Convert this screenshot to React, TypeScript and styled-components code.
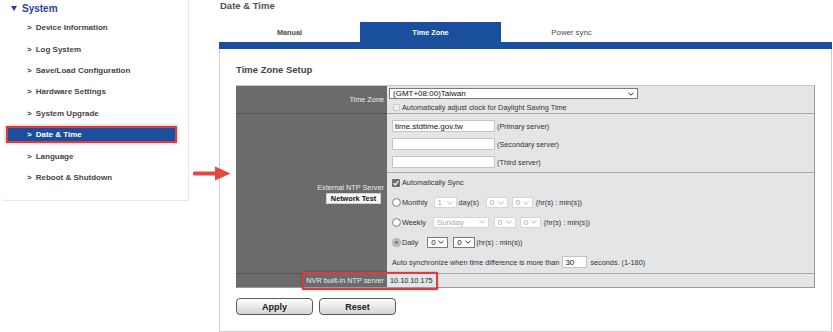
import React from "react";
import styled, { createGlobalStyle } from "styled-components";

const BLUE = "#1a4f9e";

const GlobalStyle = createGlobalStyle`
  html, body { margin: 0; padding: 0; background: #fff; }
  body {
    font-family: "Liberation Sans", Arial, sans-serif;
    width: 833px;
    height: 332px;
    overflow: hidden;
  }
  * { box-sizing: border-box; }
`;

const Page = styled.div`
  position: relative;
  display: flex;
  align-items: flex-start;
  width: 833px;
  height: 332px;
`;

/* ---------- Sidebar ---------- */
const Sidebar = styled.nav`
  flex-shrink: 0;
  width: 189px;
  height: 201px;
  border-right: 1px solid #e8e8e8;
  border-bottom: 1px solid #e8e8e8;
  border-bottom-left-radius: 4px;
`;

const SidebarHeader = styled.div`
  display: flex;
  align-items: center;
  gap: 5px;
  height: 17px;
  padding-left: 11px;
  color: #2b3f97;
  font-size: 10px;
  font-weight: bold;
`;

const MenuList = styled.ul`
  list-style: none;
  margin: 0;
  padding: 0;
`;

const MenuItem = styled.li`
  display: flex;
  align-items: center;
  height: 21.4px;
  padding-left: 6px;
`;

const MenuBox = styled.div<{ $active?: boolean }>`
  display: flex;
  align-items: center;
  width: 171px;
  height: 17px;
  padding-left: 19px;
  border: 2px solid ${(p) => (p.$active ? "#e0393e" : "transparent")};
  background: ${(p) => (p.$active ? BLUE : "transparent")};
  box-shadow: ${(p) => (p.$active ? "0 0 3px rgba(0,0,0,0.35)" : "none")};
  color: ${(p) => (p.$active ? "#fff" : "#444")};
  font-size: 8px;
  font-weight: bold;
  white-space: nowrap;
`;

const MenuChevron = styled.span`
  margin-right: 4px;
`;

/* ---------- Main ---------- */
const Main = styled.main`
  display: flex;
  flex-direction: column;
  width: 613px;
  height: 332px;
  margin-left: 30px;
`;

const PageTitle = styled.h1`
  margin: 0;
  height: 22px;
  padding-left: 1px;
  font-size: 9.5px;
  line-height: 12px;
  font-weight: bold;
  color: #515151;
`;

const TabRow = styled.div`
  display: flex;
  height: 20px;
`;

const Tab = styled.div<{ $active?: boolean; $bold?: boolean }>`
  display: flex;
  align-items: center;
  justify-content: center;
  width: 141px;
  background: ${(p) => (p.$active ? BLUE : "#fff")};
  color: ${(p) => (p.$active ? "#fff" : "#4a4a4a")};
  font-size: ${(p) => (p.$bold ? "7.3px" : "7.8px")};
  font-weight: ${(p) => (p.$bold ? "bold" : "normal")};
`;

const TabBar = styled.div`
  height: 7px;
  background: ${BLUE};
`;

const Panel = styled.section`
  flex: 1;
  border: 1px solid #cfcfcf;
  border-top: none;
  padding: 15px 16px 0 16px;
`;

const SectionTitle = styled.h2`
  margin: 0 0 9px 0;
  font-size: 9.5px;
  line-height: 12px;
  font-weight: bold;
  color: #454545;
`;

const Table = styled.div`
  width: 579px;
  border-top: 1px solid #c6c6c6;
  border-right: 1px solid #9a9a9a;
  border-bottom: 1px solid #9a9a9a;
  font-size: 7.3px;
`;

const Row = styled.div<{ $h: number }>`
  position: relative;
  display: flex;
  height: ${(p) => p.$h}px;
`;

const LabelCell = styled.div<{ $divider?: boolean }>`
  display: flex;
  flex-direction: column;
  align-items: flex-end;
  justify-content: center;
  gap: 1px;
  width: 151px;
  padding-right: 3px;
  background: #6b6b6b;
  color: #ececec;
  border-bottom: ${(p) => (p.$divider ? "1px solid #535353" : "none")};
  white-space: nowrap;
`;

const ValueCell = styled.div<{ $divider?: boolean; $pad?: string }>`
  display: flex;
  flex-direction: column;
  flex: 1;
  background: #e4e5e7;
  color: #2c2c2c;
  padding: ${(p) => p.$pad || "0"};
  border-bottom: ${(p) => (p.$divider ? "1px solid #a9a9a9" : "none")};
  white-space: nowrap;
`;

const InlineValue = styled.div`
  display: flex;
  align-items: center;
  height: 100%;
  padding-left: 3px;
  color: #222;
`;

const SelectBox = styled.div<{ $w: number; $disabled?: boolean; $ml?: number }>`
  display: flex;
  align-items: center;
  justify-content: space-between;
  flex-shrink: 0;
  width: ${(p) => p.$w}px;
  height: 11px;
  margin-left: ${(p) => p.$ml ?? 0}px;
  padding: 0 3px 0 3px;
  background: #fff;
  border: 1px solid ${(p) => (p.$disabled ? "#d6d6d6" : "#7a7a7a")};
  color: ${(p) => (p.$disabled ? "#a8a8a8" : "#111")};
  font-size: 8px;
  line-height: 9px;
`;

const CheckLine = styled.div`
  display: flex;
  align-items: center;
  gap: 2px;
  height: 10px;
  margin-top: 3px;
  padding-left: 4px;
  color: #333;
`;

const DisabledBox = styled.span`
  display: inline-block;
  width: 7px;
  height: 7px;
  border: 1px solid #c9c9c9;
  background: #efefef;
  border-radius: 1px;
`;

const ServerBlock = styled.div`
  display: flex;
  flex-direction: column;
  gap: 6px;
  height: 59px;
  padding: 6px 0 0 5px;
  border-bottom: 1px solid #a9a9a9;
`;

const ServerLine = styled.div`
  display: flex;
  align-items: center;
  gap: 2px;
  height: 12px;
  color: #333;
`;

const TextInput = styled.div<{ $w: number }>`
  display: flex;
  align-items: center;
  width: ${(p) => p.$w}px;
  height: 12px;
  padding-left: 2px;
  background: #fff;
  border: 1px solid #c4c4c4;
  color: #111;
  font-size: 8px;
`;

const SyncBlock = styled.div`
  display: flex;
  flex-direction: column;
  flex: 1;
`;

const SyncLine = styled.div`
  display: flex;
  align-items: center;
  height: 19.8px;
  padding-left: 5px;
  color: #333;
`;

const Gap = styled.span<{ $w: number }>`
  display: inline-block;
  flex-shrink: 0;
  width: ${(p) => p.$w}px;
`;

const NetworkButton = styled.div`
  display: flex;
  align-items: center;
  justify-content: center;
  width: 55px;
  height: 11px;
  margin-right: 3px;
  background: #f7f7f7;
  border: 1px solid #d0d0d0;
  color: #111;
  font-weight: bold;
`;

const Highlight = styled.div`
  position: absolute;
  left: 66px;
  top: -2px;
  width: 136px;
  height: 18px;
  border: 2px solid #e0393e;
  box-shadow: 0 0 2px rgba(0, 0, 0, 0.3);
  pointer-events: none;
`;

const ButtonRow = styled.div`
  display: flex;
  gap: 6px;
  margin-top: 10px;
`;

const ActionButton = styled.button`
  width: 77px;
  height: 17px;
  padding: 0;
  border: 1px solid #5a5a5a;
  border-radius: 4px;
  background: linear-gradient(#ffffff, #e4e4e4 60%, #d6d6d6);
  color: #222;
  font-family: "Liberation Sans", Arial, sans-serif;
  font-size: 9px;
  font-weight: bold;
`;

const ArrowWrap = styled.div`
  position: absolute;
  left: 193px;
  top: 166px;
  width: 38px;
  height: 15px;
`;

/* ---------- small drawings ---------- */
const Chevron = ({ color }: { color: string }) => (
  <svg width="6" height="4" viewBox="0 0 6 4">
    <polyline points="0.5,0.8 3,3.2 5.5,0.8" fill="none" stroke={color} strokeWidth="1" />
  </svg>
);

const Select = ({
  w,
  value,
  disabled,
  ml,
}: {
  w: number;
  value: string;
  disabled?: boolean;
  ml?: number;
}) => (
  <SelectBox $w={w} $disabled={disabled} $ml={ml}>
    <span>{value}</span>
    <Chevron color={disabled ? "#b5b5b5" : "#333"} />
  </SelectBox>
);

const Radio = ({ checked }: { checked?: boolean }) => (
  <svg width="9" height="9" viewBox="0 0 9 9" style={{ flexShrink: 0 }}>
    {checked ? (
      <>
        <circle cx="4.5" cy="4.5" r="4" fill="#c9c9c9" stroke="#9a9a9a" strokeWidth="0.8" />
        <circle cx="4.5" cy="4.5" r="2" fill="#8a8a8a" />
      </>
    ) : (
      <circle cx="4.5" cy="4.5" r="3.9" fill="#fff" stroke="#6f6f6f" strokeWidth="0.9" />
    )}
  </svg>
);

const CheckedBox = () => (
  <svg width="8" height="8" viewBox="0 0 8 8" style={{ flexShrink: 0 }}>
    <rect x="0" y="0" width="8" height="8" rx="1" fill="#6f6f6f" />
    <polyline points="1.6,4.2 3.3,5.8 6.4,2.2" fill="none" stroke="#fff" strokeWidth="1.2" />
  </svg>
);

const menu = [
  "Device Information",
  "Log System",
  "Save/Load Configuration",
  "Hardware Settings",
  "System Upgrade",
  "Date & Time",
  "Language",
  "Reboot & Shutdown",
];

export default function App() {
  return (
    <>
      <GlobalStyle />
      <Page>
        <Sidebar>
          <SidebarHeader>
            <svg width="6" height="5" viewBox="0 0 6 5">
              <polygon points="0,0 6,0 3,5" fill="#2b3f97" />
            </svg>
            <span>System</span>
          </SidebarHeader>
          <MenuList>
            {menu.map((m) => (
              <MenuItem key={m}>
                <MenuBox $active={m === "Date & Time"}>
                  <MenuChevron>&gt;</MenuChevron>
                  {m}
                </MenuBox>
              </MenuItem>
            ))}
          </MenuList>
        </Sidebar>

        <Main>
          <PageTitle>Date &amp; Time</PageTitle>
          <TabRow>
            <Tab $bold>Manual</Tab>
            <Tab $active $bold>
              Time Zone
            </Tab>
            <Tab>Power sync</Tab>
          </TabRow>
          <TabBar />
          <Panel>
            <SectionTitle>Time Zone Setup</SectionTitle>
            <Table>
              <Row $h={28}>
                <LabelCell $divider>Time Zone</LabelCell>
                <ValueCell $divider $pad="2px 0 0 2px">
                  <Select w={249} value="(GMT+08:00)Taiwan" />
                  <CheckLine>
                    <DisabledBox />
                    <span>Automatically adjust clock for Daylight Saving Time</span>
                  </CheckLine>
                </ValueCell>
              </Row>

              <Row $h={160}>
                <LabelCell $divider>
                  <span>External NTP Server</span>
                  <NetworkButton>Network Test</NetworkButton>
                </LabelCell>
                <ValueCell $divider>
                  <ServerBlock>
                    <ServerLine>
                      <TextInput $w={103}>time.stdtime.gov.tw</TextInput>
                      <span>(Primary server)</span>
                    </ServerLine>
                    <ServerLine>
                      <TextInput $w={103} />
                      <span>(Secondary server)</span>
                    </ServerLine>
                    <ServerLine>
                      <TextInput $w={103} />
                      <span>(Third server)</span>
                    </ServerLine>
                  </ServerBlock>
                  <SyncBlock>
                    <SyncLine>
                      <CheckedBox />
                      <Gap $w={2} />
                      <span>Automatically Sync</span>
                    </SyncLine>
                    <SyncLine>
                      <Radio />
                      <Gap $w={1} />
                      <span>Monthly</span>
                      <Select w={23} value="1" disabled ml={6} />
                      <Gap $w={2} />
                      <span>day(s)</span>
                      <Select w={22} value="0" disabled ml={7} />
                      <Select w={21} value="0" disabled ml={4} />
                      <Gap $w={3} />
                      <span>(hr(s) : min(s))</span>
                    </SyncLine>
                    <SyncLine>
                      <Radio />
                      <Gap $w={1} />
                      <span>Weekly</span>
                      <Select w={56} value="Sunday" disabled ml={7} />
                      <Select w={22} value="0" disabled ml={5} />
                      <Select w={21} value="0" disabled ml={4} />
                      <Gap $w={3} />
                      <span>(hr(s) : min(s))</span>
                    </SyncLine>
                    <SyncLine>
                      <Radio checked />
                      <Gap $w={1} />
                      <span>Daily</span>
                      <Select w={21} value="0" ml={9} />
                      <Select w={22} value="0" ml={5} />
                      <Gap $w={1} />
                      <span>(hr(s) : min(s))</span>
                    </SyncLine>
                    <SyncLine>
                      <span>Auto synchronize when time difference is more than</span>
                      <Gap $w={3} />
                      <TextInput $w={25}>30</TextInput>
                      <Gap $w={3} />
                      <span>seconds. (1-180)</span>
                    </SyncLine>
                  </SyncBlock>
                </ValueCell>
              </Row>

              <Row $h={13}>
                <LabelCell>NVR built-in NTP server</LabelCell>
                <ValueCell>
                  <InlineValue>10.10.10.175</InlineValue>
                </ValueCell>
                <Highlight />
              </Row>
            </Table>
            <ButtonRow>
              <ActionButton>Apply</ActionButton>
              <ActionButton>Reset</ActionButton>
            </ButtonRow>
          </Panel>
        </Main>

        <ArrowWrap>
          <svg width="38" height="15" viewBox="0 0 38 15">
            <rect x="0" y="5.5" width="24" height="4" rx="1.5" fill="#e8463f" />
            <polygon points="22,0.5 37.5,7.5 22,14.5" fill="#e8463f" />
          </svg>
        </ArrowWrap>
      </Page>
    </>
  );
}
